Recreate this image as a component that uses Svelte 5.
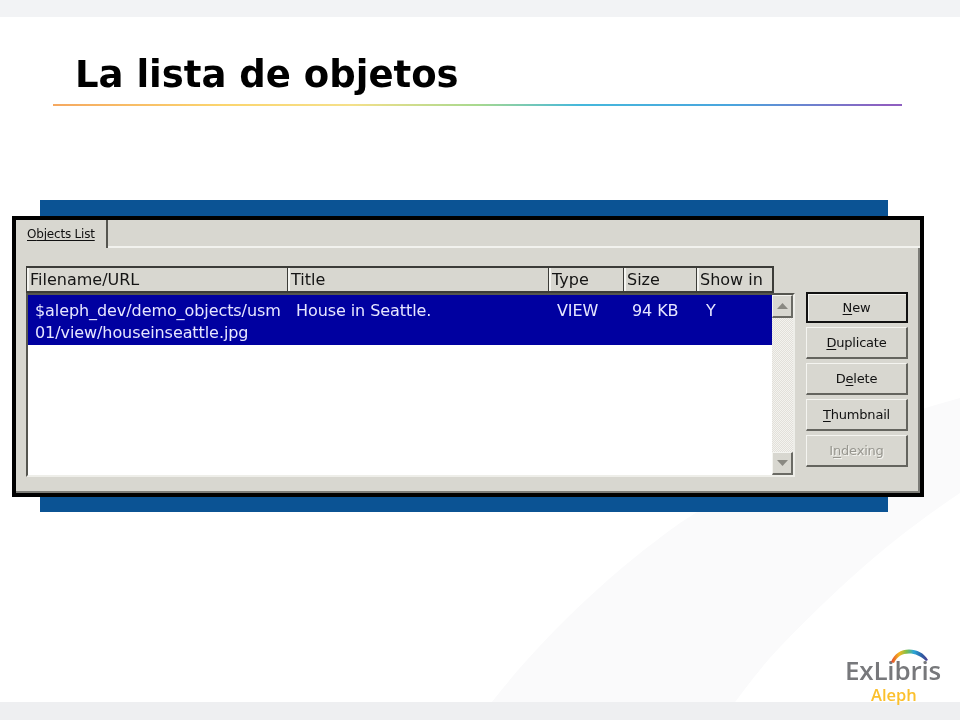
<script>
  const cols = [
    { name: 'Filename/URL' },
    { name: 'Title' },
    { name: 'Type' },
    { name: 'Size' },
    { name: 'Show in' }
  ];
</script>

<div class="slide">
  <svg class="swoosh" width="960" height="720" viewBox="0 0 960 720" aria-hidden="true">
    <path d="M478 720 C530 650 600 580 680 523 C760 470 860 425 960 398 L960 493 C890 540 840 585 780 647 C760 668 740 695 722 720 Z" fill="#fafafb" />
  </svg>
  <div class="topbar"></div>
  <header class="head">
    <h1>La lista de objetos</h1>
    <div class="rule"></div>
  </header>

  <div class="band">
    <div class="dialog">
      <div class="tabs">
        <div class="tab"><span><u>O</u>bjects List</span></div>
        <div class="tabline"></div>
      </div>
      <div class="panel">
        <div class="left">
          <div class="cols header">
            {#each cols as c}
              <div class="th">{c.name}</div>
            {/each}
          </div>
          <div class="list">
            <div class="rows">
              <div class="cols row">
                <div>$aleph_dev/demo_objects/usm<br />01/view/houseinseattle.jpg</div>
                <div>House in Seattle.</div>
                <div>VIEW</div>
                <div>94 KB</div>
                <div>Y</div>
              </div>
            </div>
            <div class="scroll">
              <div class="sbtn"><svg width="11" height="6" viewBox="0 0 11 6"><path d="M5.5 0 L11 6 L0 6 Z" fill="#8a8982" /></svg></div>
              <div class="strack"></div>
              <div class="sbtn"><svg width="11" height="6" viewBox="0 0 11 6"><path d="M0 0 L11 0 L5.5 6 Z" fill="#8a8982" /></svg></div>
            </div>
          </div>
        </div>
        <div class="buttons">
          <div class="btn primary"><span><u>N</u>ew</span></div>
          <div class="btn"><span><u>D</u>uplicate</span></div>
          <div class="btn"><span>D<u>e</u>lete</span></div>
          <div class="btn"><span><u>T</u>humbnail</span></div>
          <div class="btn disabled"><span>I<u>n</u>dexing</span></div>
        </div>
      </div>
    </div>
  </div>

  <div class="spacer"></div>
  <div class="bottombar"></div>

  <div class="logo">
    <div class="exlibris">ExLibris</div>
    <svg class="arc" width="40" height="16" viewBox="0 0 40 16" aria-hidden="true">
      <defs>
        <linearGradient id="rb" x1="0" y1="0" x2="1" y2="0">
          <stop offset="0" stop-color="#e0432b" />
          <stop offset="0.22" stop-color="#f6b521" />
          <stop offset="0.42" stop-color="#7dbf4a" />
          <stop offset="0.62" stop-color="#2aa6d8" />
          <stop offset="0.82" stop-color="#2d62a8" />
          <stop offset="1" stop-color="#4b3a8c" />
        </linearGradient>
      </defs>
      <path d="M1 14 C4 6 11 1.5 19 1.5 C27 1.5 34 5 38 12 L36 13 C31 8 25 5.5 19 5.5 C12 5.5 7 8.5 4 15 Z" fill="url(#rb)" />
    </svg>
    <div class="aleph">Aleph</div>
  </div>
</div>

<style>
  :global(body) {
    margin: 0;
    background: #fff;
  }
  .slide {
    position: relative;
    width: 960px;
    height: 720px;
    overflow: hidden;
    display: flex;
    flex-direction: column;
    background: #fff;
    font-family: "DejaVu Sans", sans-serif;
  }
  .swoosh {
    position: absolute;
    inset: 0;
  }
  .topbar {
    position: relative;
    height: 17px;
    background: #f2f3f5;
    flex: none;
  }
  .bottombar {
    position: relative;
    height: 18px;
    background: #eeeff1;
    flex: none;
  }
  .head {
    position: relative;
    height: 183px;
    flex: none;
    padding: 36px 58px 0 53px;
    box-sizing: border-box;
  }
  h1 {
    margin: 0 0 0 22px;
    font: bold 37px/44px "DejaVu Sans", sans-serif;
    color: #000;
    filter: blur(0.3px);
  }
  .rule {
    height: 2px;
    margin-top: 7px;
    background: linear-gradient(90deg, #f5a860 0%, #fbd56e 20%, #f5e08a 35%, #a8d98f 50%, #45b8dc 62%, #4aa5de 80%, #8e5fc0 98%);
  }
  .band {
    position: relative;
    flex: none;
    margin-left: 40px;
    width: 848px;
    height: 312px;
    background: #0b5394;
    padding-top: 16px;
    box-sizing: border-box;
  }
  .dialog {
    margin-left: -28px;
    width: 912px;
    height: 281px;
    box-sizing: border-box;
    border: 4px solid #000;
    background: #d8d7d0;
    display: flex;
    flex-direction: column;
    color: #222;
    filter: blur(0.5px);
  }
  .tabs {
    display: flex;
    height: 28px;
    flex: none;
  }
  .tab {
    width: 92px;
    box-sizing: border-box;
    border-right: 2px solid #55554f;
    padding: 7px 0 0 11px;
    font-size: 12px;
    letter-spacing: -0.2px;
    white-space: nowrap;
    color: #111;
  }
  .tab span {
    text-decoration: underline;
    text-underline-offset: 2px;
  }
  .tab u {
    text-decoration: none;
  }
  .tabline {
    flex: 1;
    border-bottom: 2px solid #f2f2ee;
  }
  .panel {
    flex: 1;
    display: flex;
    padding: 18px 0 0 10px;
    gap: 11px;
    min-height: 0;
    border-right: 2px solid #7d7d78;
    border-bottom: 2px solid #7d7d78;
  }
  .left {
    width: 769px;
    flex: none;
  }
  .cols {
    display: grid;
    grid-template-columns: 261px 261px 75px 73px 78px;
  }
  .header {
    height: 27px;
    box-sizing: border-box;
    width: 748px;
  }
  .th {
    box-sizing: border-box;
    border-top: 2px solid #3c3c38;
    border-bottom: 2px solid #3c3c38;
    border-left: 1px solid #3c3c38;
    box-shadow: inset 2px 0 0 #f4f4f0;
    padding: 2px 0 0 3px;
    font-size: 16px;
    line-height: 20px;
    white-space: nowrap;
    color: #141414;
  }
  .th:last-child {
    border-right: 2px solid #3c3c38;
  }
  .list {
    height: 184px;
    box-sizing: border-box;
    border-top: 2px solid #55554f;
    border-left: 2px solid #55554f;
    border-bottom: 2px solid #eeeee9;
    border-right: 2px solid #eeeee9;
    background: #fff;
    display: flex;
  }
  .rows {
    width: 744px;
    flex: none;
  }
  .row {
    height: 50px;
    background: #0000a0;
    color: #e6e6ff;
    font-size: 16px;
    letter-spacing: -0.08px;
    line-height: 22px;
    padding-top: 5px;
    box-sizing: border-box;
    white-space: nowrap;
    grid-template-columns: 261px 261px 75px 74px 73px;
  }
  .row > div {
    padding-left: 7px;
  }
  .scroll {
    flex: 1;
    display: flex;
    flex-direction: column;
    background: repeating-conic-gradient(#f4f3ef 0 25%, #e2e0da 0 50%) 0 0 / 2px 2px;
  }
  .sbtn {
    height: 23px;
    flex: none;
    background: #d8d7d0;
    box-sizing: border-box;
    border-top: 1px solid #f4f4f0;
    border-left: 1px solid #f4f4f0;
    border-right: 2px solid #6a6a64;
    border-bottom: 2px solid #6a6a64;
    display: flex;
    align-items: center;
    justify-content: center;
  }
  .strack {
    flex: 1;
  }
  .buttons {
    width: 102px;
    flex: none;
    padding-top: 26px;
    display: flex;
    flex-direction: column;
    gap: 4px;
  }
  .btn {
    height: 32px;
    box-sizing: border-box;
    background: #d8d7d0;
    border-top: 1px solid #f4f4f0;
    border-left: 1px solid #f4f4f0;
    border-right: 2px solid #64645e;
    border-bottom: 2px solid #64645e;
    display: flex;
    align-items: center;
    justify-content: center;
    font-size: 13px;
    letter-spacing: -0.2px;
    color: #111;
  }
  .btn.primary {
    height: 31px;
    outline: 2px solid #111;
    outline-offset: -2px;
    box-shadow: inset 2px 2px 0 #f4f4f0;
    border-color: transparent;
  }
  .btn.disabled {
    color: #97968f;
    text-shadow: 1px 1px 0 #f4f4f0;
  }
  .btn u {
    text-underline-offset: 2px;
  }
  .spacer {
    flex: 1;
  }
  .logo {
    position: absolute;
    left: 845px;
    top: 648px;
    width: 100px;
    height: 58px;
    filter: blur(0.3px);
  }
  .arc {
    position: absolute;
    left: 45px;
    top: 0;
  }
  .exlibris {
    position: absolute;
    left: 0;
    top: 9px;
    font: 600 26px/26px "Open Sans", sans-serif;
    letter-spacing: -0.2px;
    color: #77787b;
    white-space: nowrap;
  }
  .aleph {
    position: absolute;
    left: 26px;
    top: 36px;
    font: 600 16.5px/21px "Open Sans", sans-serif;
    color: #fbc02d;
  }
</style>
